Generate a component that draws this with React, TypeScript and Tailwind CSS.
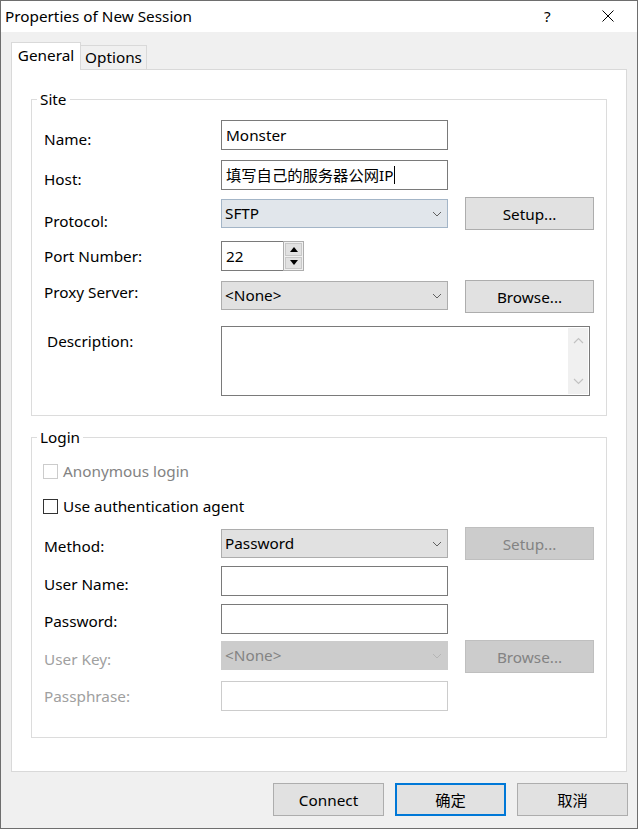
import React from "react";

const FONT = "font-['Noto_Sans','Noto_Sans_CJK_SC',sans-serif]";

function Chevron({ color = "#606060" }: { color?: string }) {
  return (
    <svg width="10" height="6" viewBox="0 0 10 6" className="shrink-0">
      <polyline points="1,1 5,5 9,1" fill="none" stroke={color} strokeWidth="1" />
    </svg>
  );
}

function Label({ children, className = "", disabled = false }: { children: React.ReactNode; className?: string; disabled?: boolean }) {
  return (
    <div className={`w-[177px] shrink-0 text-[15.3px] leading-5 ${disabled ? "text-[#a0a0a0]" : "text-black"} ${className}`}>
      {children}
    </div>
  );
}

function TextBox({ children, disabled = false }: { children?: React.ReactNode; disabled?: boolean }) {
  return (
    <div
      className={`w-[227px] h-[30px] bg-white border ${disabled ? "border-[#cccccc]" : "border-[#7a7a7a]"} flex items-center px-[4px] pb-[1px] text-[15.3px] leading-5`}
    >
      {children}
    </div>
  );
}

function Select({ value, variant = "normal" }: { value: string; variant?: "normal" | "focus" | "disabled" }) {
  const cls =
    variant === "focus"
      ? "bg-[#e1e6eb] border-[#a3b5c7] text-black"
      : variant === "disabled"
      ? "bg-[#cccccc] border-[#cccccc] text-[#838383]"
      : "bg-[#e1e1e1] border-[#adadad] text-black";
  return (
    <div className={`w-[227px] h-[29px] border ${cls} flex items-center justify-between pl-[3px] pr-[5px] text-[15.3px] leading-5`}>
      <span className="mb-[2px]">{value}</span>
      <Chevron color={variant === "disabled" ? "#b5b5b5" : "#606060"} />
    </div>
  );
}

function Button({ children, disabled = false, className = "" }: { children: React.ReactNode; disabled?: boolean; className?: string }) {
  return (
    <div
      className={`w-[129px] h-[33px] border flex items-center justify-center text-[15.3px] leading-5 ${
        disabled ? "bg-[#cccccc] border-[#bfbfbf] text-[#838383]" : "bg-[#e1e1e1] border-[#adadad] text-black"
      } ${className}`}
    >
      {children}
    </div>
  );
}

function Check({ label, disabled = false }: { label: string; disabled?: boolean }) {
  return (
    <div className="flex items-center h-5 ml-[-1px]">
      <div className={`w-[15px] h-[15px] bg-white border ${disabled ? "border-[#cccccc]" : "border-[#333333]"}`} />
      <span className={`ml-[5px] text-[15.3px] leading-5 ${disabled ? "text-[#838383]" : "text-black"}`}>{label}</span>
    </div>
  );
}

function Spinner() {
  return (
    <div className="w-[21px] h-[30px] border border-[#adadad] flex flex-col bg-[#f0f0f0] p-px gap-px">
      <div className="flex-1 bg-[#e1e1e1] border border-[#c8c8c8] flex items-center justify-center">
        <svg width="8" height="5" viewBox="0 0 8 5">
          <polygon points="4,0 8,5 0,5" fill="#000" />
        </svg>
      </div>
      <div className="flex-1 bg-[#e1e1e1] border border-[#c8c8c8] flex items-center justify-center">
        <svg width="8" height="5" viewBox="0 0 8 5">
          <polygon points="0,0 8,0 4,5" fill="#000" />
        </svg>
      </div>
    </div>
  );
}

export default function App() {
  return (
    <div className={`w-[638px] h-[829px] border border-[#6e6e6e] bg-[#f0f0f0] flex flex-col ${FONT} text-black`}>
      {/* Title bar */}
      <div className="h-[31px] bg-white flex items-center shrink-0 pb-[2px]">
        <span className="ml-[4px] text-[15.3px] leading-5 flex-1">Properties of New Session</span>
        <span className="text-[15.3px] leading-5 w-[12px] mr-[46px]">?</span>
        <svg width="12" height="12" viewBox="0 0 12 12" className="mr-[23px]">
          <line x1="0.5" y1="0.5" x2="11.5" y2="11.5" stroke="#000" strokeWidth="1" />
          <line x1="11.5" y1="0.5" x2="0.5" y2="11.5" stroke="#000" strokeWidth="1" />
        </svg>
      </div>

      {/* Tabs */}
      <div className="pt-[10px] px-[10px]">
        <div className="flex items-end">
          <div className="relative z-10 h-[28px] w-[70px] mb-[-1px] bg-white border border-b-0 border-[#d9d9d9] flex items-start justify-center pt-[2px] text-[15.3px] leading-5">
            General
          </div>
          <div className="h-[24px] w-[66px] bg-[#f0f0f0] border-t border-r border-[#d9d9d9] flex items-start justify-center pt-[1px] text-[15.3px] leading-5">
            Options
          </div>
        </div>

        {/* Panel */}
        <div className="h-[703px] bg-white border border-[#d9d9d9] px-[19px] pt-[19px]">
          {/* Site */}
          <fieldset className="border border-[#dcdcdc] px-[12px] pb-[19px]">
            <legend className="ml-[-7px] px-[3px] text-[15.3px] leading-5">Site</legend>
            <div className="flex items-start h-[30px] mt-[11px]">
              <Label className="mt-[9px]">Name:</Label>
              <TextBox>Monster</TextBox>
            </div>
            <div className="flex items-start h-[30px] mt-[10px]">
              <Label className="mt-[9px]">Host:</Label>
              <TextBox>
                <span>填写自己的服务器公网IP</span>
                <span className="w-px h-[18px] bg-black ml-[1px]" />
              </TextBox>
            </div>
            <div className="flex items-start h-[33px] mt-[7px]">
              <Label className="mt-[14px]">Protocol:</Label>
              <div className="mt-[2px]">
                <Select value="SFTP" variant="focus" />
              </div>
              <Button className="ml-[17px]">Setup...</Button>
            </div>
            <div className="flex items-start h-[30px] mt-[11px]">
              <Label className="mt-[5px]">Port Number:</Label>
              <div className="w-[62px] h-[30px] bg-white border border-r-0 border-[#7a7a7a] flex items-center px-[4px] pb-[1px] text-[15.3px] leading-5">
                22
              </div>
              <Spinner />
            </div>
            <div className="flex items-start h-[33px] mt-[9px]">
              <Label className="mt-[2px]">Proxy Server:</Label>
              <div className="mt-[1px]">
                <Select value="<None>" />
              </div>
              <Button className="ml-[17px]">Browse...</Button>
            </div>
            <div className="flex items-start h-[70px] mt-[13px]">
              <Label className="mt-[5px] pl-[3px]">Description:</Label>
              <div className="w-[369px] h-[70px] bg-white border border-[#7a7a7a] flex justify-end p-px">
                <div className="w-[20px] h-full bg-[#f0f0f0] flex flex-col items-center justify-between py-[9px]">
                  <svg width="11" height="7" viewBox="0 0 11 7">
                    <polyline points="1,6 5.5,1.5 10,6" fill="none" stroke="#c2c2c2" strokeWidth="1.2" />
                  </svg>
                  <svg width="11" height="7" viewBox="0 0 11 7">
                    <polyline points="1,1 5.5,5.5 10,1" fill="none" stroke="#c2c2c2" strokeWidth="1.2" />
                  </svg>
                </div>
              </div>
            </div>
          </fieldset>

          {/* Login */}
          <fieldset className="border border-[#dcdcdc] px-[12px] pb-[26px] mt-[11px]">
            <legend className="ml-[-7px] px-[3px] text-[15.3px] leading-5">Login</legend>
            <div className="mt-[14px]">
              <Check label="Anonymous login" disabled />
            </div>
            <div className="mt-[15px]">
              <Check label="Use authentication agent" />
            </div>
            <div className="flex items-start h-[33px] mt-[11px]">
              <Label className="mt-[9px]">Method:</Label>
              <div className="mt-[2px]">
                <Select value="Password" />
              </div>
              <Button disabled className="ml-[17px]">Setup...</Button>
            </div>
            <div className="flex items-start h-[30px] mt-[6px]">
              <Label className="mt-[8px]">User Name:</Label>
              <TextBox />
            </div>
            <div className="flex items-start h-[30px] mt-[8px]">
              <Label className="mt-[7px]">Password:</Label>
              <TextBox />
            </div>
            <div className="flex items-start h-[33px] mt-[6px]">
              <Label disabled className="mt-[9px]">User Key:</Label>
              <div className="mt-[1px]">
                <Select value="<None>" variant="disabled" />
              </div>
              <Button disabled className="ml-[17px]">Browse...</Button>
            </div>
            <div className="flex items-start h-[30px] mt-[8px]">
              <Label disabled className="mt-[5px]">Passphrase:</Label>
              <TextBox disabled />
            </div>
          </fieldset>
        </div>
      </div>

      {/* Bottom buttons */}
      <div className="flex justify-end gap-[11px] mt-[11px] pr-[9px]">
        <div className="w-[111px] h-[33px] bg-[#e1e1e1] border border-[#adadad] flex items-center justify-center text-[15.3px] leading-5">
          Connect
        </div>
        <div className="w-[111px] h-[33px] bg-[#e1e1e1] border-2 border-[#0078d7] flex items-center justify-center text-[15.3px] leading-5">
          确定
        </div>
        <div className="w-[111px] h-[33px] bg-[#e1e1e1] border border-[#adadad] flex items-center justify-center text-[15.3px] leading-5">
          取消
        </div>
      </div>
    </div>
  );
}
